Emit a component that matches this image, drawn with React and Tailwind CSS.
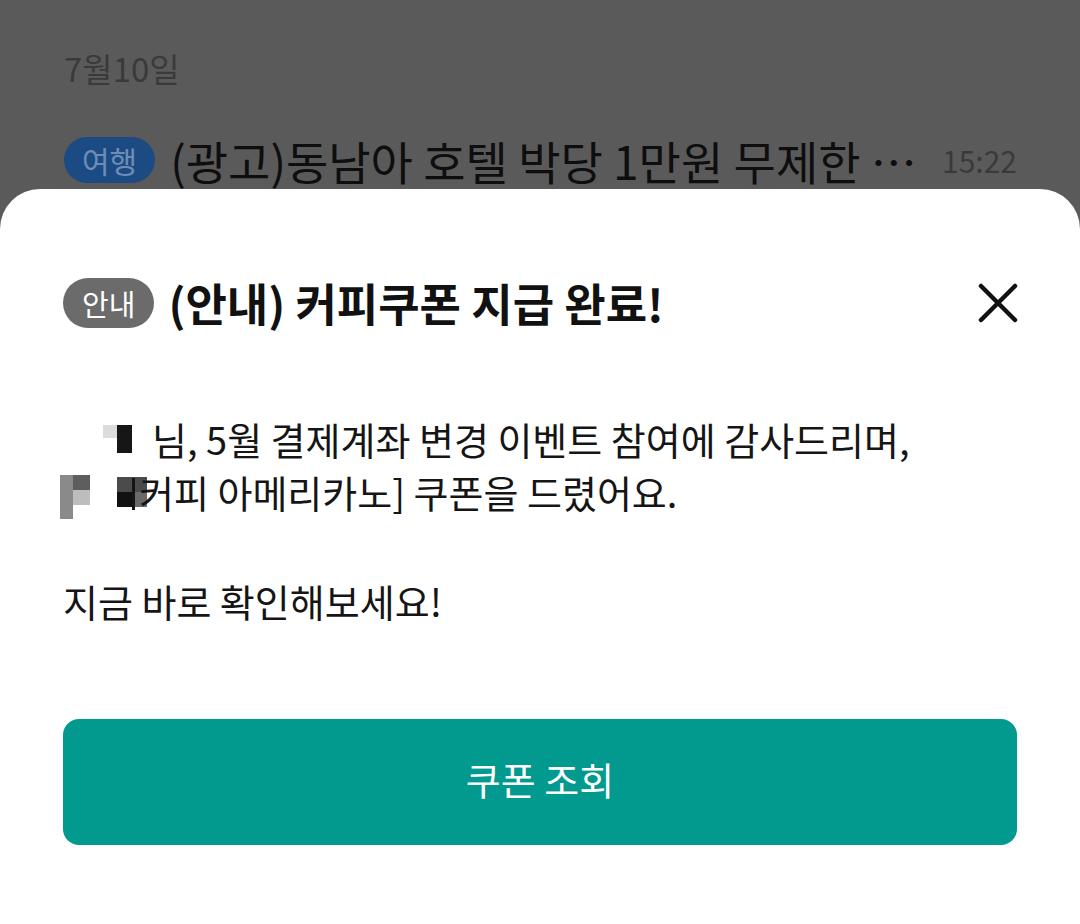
import React from "react";

const font = { fontFamily: '"Noto Sans CJK KR", "Noto Sans", sans-serif' };

function CloseIcon() {
    return (
        <svg width="40" height="40" viewBox="0 0 40 40" fill="none">
            <path d="M3 3L37 37M37 3L3 37" stroke="#111" strokeWidth="4.5" strokeLinecap="round" />
        </svg>
    );
}

export default function App() {
    return (
        <div className="w-[1080px] h-[924px] bg-[#5a5a5a] flex flex-col overflow-hidden" style={font}>
            {/* dimmed list behind the sheet */}
            <div className="h-[189px] shrink-0 px-[64px] pt-[46px] flex flex-col">
                <div className="text-[33px] leading-[44px] text-[#3a3a3a]">7월10일</div>
                <div className="mt-[45px] flex items-center">
                    <span className="h-[46px] px-[18px] rounded-full bg-[#1c4a82] text-[#6d8db6] text-[30px] leading-[46px]">여행</span>
                    <span className="ml-[15px] text-[46px] leading-[50px] text-[#0e0e0e] whitespace-nowrap">(광고)동남아 호텔 박당 1만원 무제한 ⋯</span>
                    <span className="ml-auto mr-[-1px] text-[30px] text-[#3a3a3a]">15:22</span>
                </div>
            </div>

            <div className="flex-1 bg-white rounded-t-[40px] px-[63px] pt-[89px]">
                <div className="flex items-center h-[50px]">
                    <span className="h-[50px] px-[19px] rounded-full bg-[#6b6b6b] text-white text-[29px] leading-[50px]">안내</span>
                    <span className="ml-[14px] text-[45px] font-bold text-[#111] whitespace-nowrap">(안내) 커피쿠폰 지급 완료!</span>
                    <span className="ml-auto mr-[-1px]"><CloseIcon /></span>
                </div>

                <div className="mt-[85px] text-[38px] leading-[52px] text-[#151515] whitespace-nowrap">
                    <div className="flex items-center">
                        <span className="ml-[40px] flex items-start h-[28px]">
                            <span className="w-[14px] h-[13px] bg-[#dcdcdc]" />
                            <span className="w-[15px] h-[28px] bg-[#161616]" />
                        </span>
                        <span className="ml-[20px]">님, 5월 결제계좌 변경 이벤트 참여에 감사드리며,</span>
                    </div>
                    <div className="flex items-center">
                        <span className="ml-[-3px] flex h-[44px] mt-[10px]">
                            <span className="w-[13px] h-[44px] bg-[#8a8a8a]" />
                            <span className="flex flex-col">
                                <span className="w-[17px] h-[15px] bg-[#5e5e5e]" />
                                <span className="w-[17px] h-[15px] bg-[#bdbdbd]" />
                            </span>
                        </span>
                        <span className="ml-[27px] w-[30px] h-[30px] flex flex-col">
                            <span className="h-[15px] bg-[#4b4b4b]" />
                            <span className="h-[15px] flex">
                                <span className="w-[15px] bg-[#111]" />
                                <span className="w-[15px] bg-[#6a6a6a]" />
                            </span>
                        </span>
                        <span className="ml-[-15px] w-[3px] h-[32px] mt-[4px] bg-[#151515]" />
                        <span className="ml-[4px]">커피 아메리카노] 쿠폰을 드렸어요.</span>
                    </div>
                    <div className="h-[56px]" />
                    <div>지금 바로 확인해보세요!</div>
                </div>

                <button className="mt-[92px] w-[954px] h-[126px] pb-[8px] rounded-[16px] bg-[#029a8f] text-white text-[38px] flex items-center justify-center">
                    쿠폰 조회
                </button>
            </div>
        </div>
    );
}
